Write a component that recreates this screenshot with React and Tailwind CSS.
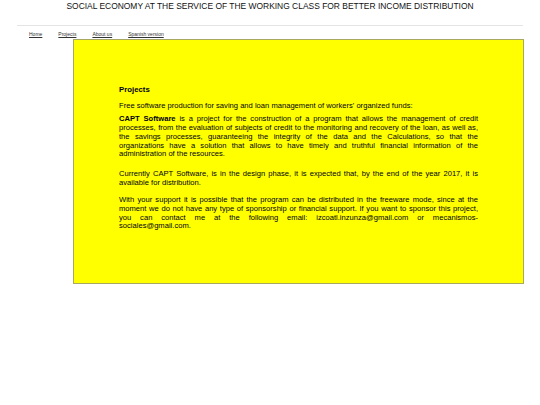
const NAV = ['Home', 'Projects', 'About us', 'Spanish version']

export default function App() {
  return (
    <div className="w-[540px] h-[405px] bg-white text-black" style={{ fontFamily: '"Liberation Sans", Arial, sans-serif' }}>
      <h1 className="pt-px text-center text-[8.45px] leading-[10px] font-normal text-[#111]">
        SOCIAL ECONOMY AT THE SERVICE OF THE WORKING CLASS FOR BETTER INCOME DISTRIBUTION
      </h1>
      <div className="mx-[17px] mt-[14px] border-t border-[#e4e4e4]" />
      <nav className="flex gap-[16px] pl-[29px] pt-[5px] text-[5px] leading-[6px] text-[#333]">
        {NAV.map((n) => (
          <a key={n} href="#" className="underline">{n}</a>
        ))}
      </nav>
      <div className="ml-[73px] mt-[2px] w-[451px] h-[245px] bg-[#ffff00] border border-[#a8a860] px-[45px] pt-[46px]">
        <div className="text-[7.6px] leading-[8.7px] text-black text-justify">
          <h2 className="font-bold text-[7.8px] mb-[7px]">Projects</h2>
          <p className="mb-[5px]">Free software production for saving and loan management of workers' organized funds:</p>
          <p className="mb-[11px]">
            <b>CAPT Software</b> is a project for the construction of a program that allows the management of credit processes, from the evaluation of subjects of credit to the monitoring and recovery of the loan, as well as, the savings processes, guaranteeing the integrity of the data and the Calculations, so that the organizations have a solution that allows to have timely and truthful financial information of the administration of the resources.
          </p>
          <p className="mb-[9px]">
            Currently CAPT Software, is in the design phase, it is expected that, by the end of the year 2017, it is available for distribution.
          </p>
          <p>
            With your support it is possible that the program can be distributed in the freeware mode, since at the moment we do not have any type of sponsorship or financial support. If you want to sponsor this project, you can contact me at the following email: izcoatl.inzunza@gmail.com or mecanismos-sociales@gmail.com.
          </p>
        </div>
      </div>
    </div>
  )
}
